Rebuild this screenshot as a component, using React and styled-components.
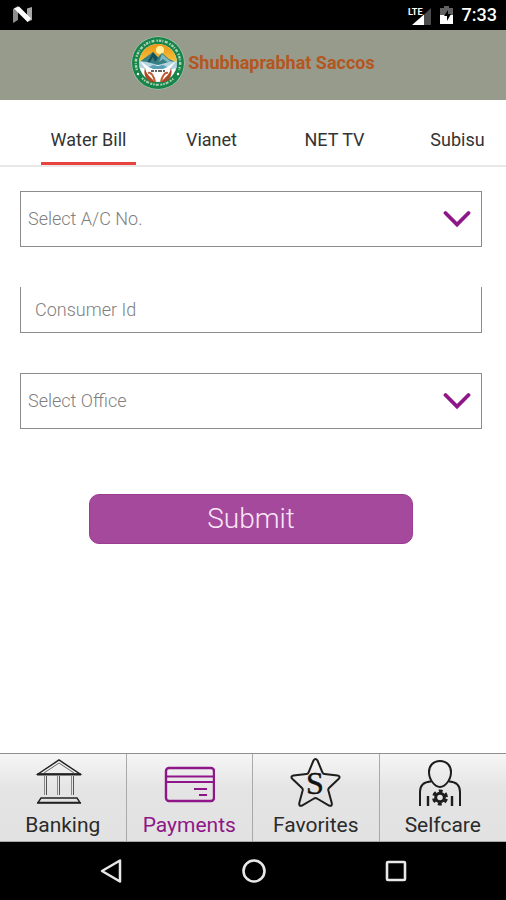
import React, { useState } from "react";
import styled, { createGlobalStyle } from "styled-components";

const GlobalStyle = createGlobalStyle`
  * {
    box-sizing: border-box;
  }
  body {
    margin: 0;
    background: #fff;
    font-family: Roboto, "Liberation Sans", sans-serif;
  }
  button, input, select {
    font-family: inherit;
  }
`;

const Screen = styled.div`
  display: flex;
  flex-direction: column;
  min-height: 100vh;
  overflow: hidden;
`;

const StatusBar = styled.div`
  display: flex;
  align-items: center;
  height: 30px;
  padding: 0 9px 0 13px;
  background: #000;
  color: #fff;
`;

const StatusIcons = styled.div`
  display: flex;
  align-items: center;
  margin-left: auto;
  gap: 9px;
`;

const Clock = styled.span`
  font-size: 18px;
  font-weight: 500;
  line-height: 30px;
`;

const Header = styled.header`
  display: flex;
  justify-content: center;
  gap: 3px;
  height: 70px;
  padding-top: 6px;
  background: #969b8c;
`;

const Title = styled.h1`
  margin: 0;
  color: #b5561f;
  font-size: 18px;
  font-weight: 700;
  line-height: 54px;
`;

const Tabs = styled.nav`
  display: flex;
  height: 67px;
  padding-left: 27px;
  border-bottom: 2px solid #e8e8e8;
`;

const Tab = styled.button`
  flex: 0 0 123px;
  padding: 0;
  border: 0;
  background: none;
  color: #333;
  font-size: 18px;
  cursor: pointer;
`;

const TabLabel = styled.span`
  display: inline-block;
  height: 65px;
  padding: 0 10px;
  border-bottom: 3px solid ${(props) => (props.$active ? "#e8433f" : "transparent")};
  line-height: 80px;
`;

const Form = styled.form`
  display: flex;
  flex: 1;
  flex-direction: column;
  padding: 24px 24px 24px 20px;
`;

const SelectBox = styled.div`
  display: grid;
  align-items: center;
  height: 56px;
  border: 1px solid #8c8c8c;

  & > * {
    grid-area: 1 / 1;
  }
  & > svg {
    justify-self: end;
    margin-right: 10px;
    pointer-events: none;
  }
`;

const Select = styled.select`
  width: 100%;
  height: 100%;
  padding: 0 44px 2px 7px;
  border: 0;
  appearance: none;
  background: transparent;
  color: #808080;
  font-size: 18px;
  font-weight: 300;
`;

const TextInput = styled.input`
  height: 46px;
  margin: 40px 0;
  padding: 0 14px 1px;
  border: 1px solid #8c8c8c;
  border-top: 0;
  border-radius: 0;
  background: #fff;
  color: #808080;
  font-size: 18px;
  font-weight: 300;

  &::placeholder {
    color: #808080;
    opacity: 1;
  }
`;

const SubmitButton = styled.button`
  align-self: center;
  width: 70%;
  height: 50px;
  margin-top: 65px;
  border: 1px solid #9c3c93;
  border-radius: 10px;
  background: #a4499b;
  color: #fbe6f9;
  font-size: 28px;
  font-weight: 300;
  line-height: 46px;
  cursor: pointer;
`;

const BottomNav = styled.nav`
  display: grid;
  grid-template-columns: repeat(4, 1fr);
  height: 89px;
  border-top: 1px solid #8f8f8f;
  border-bottom: 1px solid #a9a9a9;
`;

const NavItem = styled.a`
  display: flex;
  flex-direction: column;
  align-items: center;
  padding-top: 3px;
  border-right: 1px solid #a9a9a9;
  background: linear-gradient(#f6f6f6, #e4e4e4 40%, #e2e2e2);
  color: ${(props) => (props.$active ? "#8f1688" : "#2b2b2b")};
  font-size: 21px;
  line-height: 26px;
  text-decoration: none;

  &:last-child {
    border-right: 0;
  }
  & > svg {
    flex: none;
    margin-bottom: 3px;
  }
`;

const SystemBar = styled.div`
  display: flex;
  justify-content: space-between;
  align-items: center;
  height: 58px;
  padding: 0 97px 0 98px;
  background: #000;
`;

const SystemButton = styled.button`
  display: flex;
  padding: 0;
  border: 0;
  background: none;
  cursor: pointer;
`;

const tabs = ["Water Bill", "Vianet", "NET TV", "Subisu"];

function AndroidN() {
  return (
    <svg width="20" height="18" viewBox="0 0 20 18" aria-hidden="true">
      <path d="M0 3 5 0v14l-5 3z" fill="#8d8d8d" />
      <path d="M14 2.500l5-1.500v13l-5 2z" fill="#a8a8a8" />
      <path d="M1 2.500 6 .5l12 12-3.500 3.500z" fill="#fff" />
    </svg>
  );
}

function Signal() {
  return (
    <svg width="24" height="21" viewBox="0 0 24 21" aria-label="LTE signal">
      <path d="M24 3v17H6z" fill="#4b4b4b" />
      <path d="M17 9.500V20H5z" fill="#fff" />
      <text x="1" y="10" fill="#fff" fontSize="9" fontWeight="700">
        LTE
      </text>
    </svg>
  );
}

function Battery() {
  return (
    <svg width="13" height="18" viewBox="0 0 13 18" aria-hidden="true">
      <path d="M4 0h5v2h4v7H0V2h4z" fill="#626262" />
      <path d="M0 9h13v9H0z" fill="#fff" />
      <path d="M8 4 4 10h3v5l4-7H8z" fill="#000" />
    </svg>
  );
}

function Logo() {
  return (
    <svg width="54" height="54" viewBox="0 0 54 54" aria-hidden="true">
      <defs>
        <clipPath id="seal">
          <circle cx="27" cy="27" r="19" />
        </clipPath>
        <linearGradient id="sky" x1="0" y1="0" x2="0" y2="1">
          <stop offset="0" stopColor="#e89312" />
          <stop offset="1" stopColor="#f6c53e" />
        </linearGradient>
      </defs>
      <circle cx="27" cy="27" r="26.500" fill="#b9d0bb" />
      <circle cx="27" cy="27" r="26" fill="#17844a" />
      <path
        d="M6 34A22.200 22.200 0 1 1 48 34"
        fill="none"
        stroke="#a9d3b4"
        strokeWidth="2.400"
        strokeDasharray="1.500 1 2.500 1 1 1.500 3 2"
      />
      <path
        d="M11 42A22.200 22.200 0 0 0 43 42"
        fill="none"
        stroke="#a9d3b4"
        strokeWidth="2"
        strokeDasharray="2 1 1.500 1 3 1.500"
      />
      <circle cx="7" cy="38" r="1.200" fill="#fff" />
      <circle cx="47" cy="38" r="1.200" fill="#fff" />
      <g clipPath="url(#seal)">
        <path d="M8 8h38v38H8z" fill="#fff" />
        <path d="M8 7h38v19H8z" fill="url(#sky)" />
        <circle cx="29" cy="14" r="4" fill="#fff0a2" />
        <path d="M7 27l8-6 7-5 5 5 4-4 7 6 9 4v4H7z" fill="#367f83" />
        <path d="M22 16l5 6-3 4-2-5-3 5-3 1z" fill="#174f56" />
        <path d="M31 18l7 6 5 3-7-1-4-3-4 3z" fill="#7fb8bd" />
        <path d="M7 25l9 1 11 3 11-3 9-1v7l-11 2H18L7 31z" fill="#b6d4df" />
        <path d="M9 25l10 7 8-3 8 3 10-7-8 10H16z" fill="#fff" />
        <path d="M18 31l4-2 5 1 5-1 4 2-4 2H22z" fill="#5aa0b5" />
      </g>
      <path d="M14 32c2 8 5 8 10 14h-4c-5-2-8-8-6-14z" fill="#ae4824" />
      <path d="M40 32c-2 8-5 8-10 14h4c5-2 8-8 6-14z" fill="#ae4824" />
      <path d="M17 37c3-1 6 3 7 9M37 37c-3-1-6 3-7 9" fill="none" stroke="#bd6038" strokeWidth="2" />
      <path d="M20 35h3m1 0h2m1 0h4m1 0h2" stroke="#666" strokeWidth="2" />
    </svg>
  );
}

function Chevron() {
  return (
    <svg width="28" height="18" viewBox="0 0 28 18" aria-hidden="true">
      <path
        d="M2.500 3 14 14.500 25.500 3"
        fill="none"
        stroke="#8f1688"
        strokeWidth="3.800"
        strokeLinecap="round"
      />
    </svg>
  );
}

function BankIcon() {
  return (
    <svg width="60" height="52" viewBox="0 0 60 52" fill="none" stroke="#222" aria-hidden="true">
      <path d="M5 17 26 3l21 14z" strokeWidth="1.500" />
      <path d="M11 16 26 6l15 10" strokeWidth="1" stroke="#666" />
      <path d="M4 17.500h44" strokeWidth="1.800" />
      <path d="M11.500 19v19M24.500 19v19M38.500 19v19" stroke="#888" />
      <path d="M13.500 19v19M26.500 19v19M40.500 19v19" stroke="#555" />
      <path d="M8 41h36l3 4.500H5z" strokeWidth="1.400" />
      <path d="M4 46h44" strokeWidth="1.400" />
    </svg>
  );
}

function CardIcon() {
  return (
    <svg width="52" height="52" viewBox="0 0 52 52" fill="none" stroke="#8f1688" aria-hidden="true">
      <rect x="3" y="11" width="48" height="33" rx="3" strokeWidth="2.400" />
      <path d="M3 19.500h48M3 25h48" strokeWidth="2.200" />
      <path d="M31 32h13M36 38h8" strokeWidth="2" />
    </svg>
  );
}

function StarIcon() {
  return (
    <svg width="52" height="52" viewBox="0 0 52 52" aria-hidden="true">
      <path
        d="M23.500 3.500q2-3.200 4 0l5 12q.5 1.500 2 1.500l13 1.500q3.500 1 1 3.500L39 31q-1 1-.7 2.300l3.500 13q.5 3.500-2.800 2.200L27 41.500q-1.500-.8-3 0L12 48.500q-3 1.300-2.800-2.200l3.500-13q.3-1.300-.7-2.300L2.500 22q-2.500-2.500 1-3.500L16.500 17q1.500 0 2-1.500z"
        fill="none"
        stroke="#1d1d1d"
        strokeWidth="2"
      />
      <text
        x="25"
        y="37"
        textAnchor="middle"
        fill="#111"
        stroke="#111"
        strokeWidth=".5"
        fontFamily="Liberation Serif, serif"
        fontSize="32"
      >
        S
      </text>
    </svg>
  );
}

function PersonIcon() {
  return (
    <svg width="58" height="52" viewBox="0 0 58 52" fill="none" stroke="#1d1d1d" aria-hidden="true">
      <path
        d="M26 4c7 0 11 5 11 11 0 8-6 15-11 15S15 23 15 15C15 9 19 4 26 4z"
        strokeWidth="2"
      />
      <path d="M6 49V35q0-10 11-10.500M46 49V35q0-10-11-10.500" strokeWidth="2" />
      <path d="M14 39v10M38 39v10" strokeWidth="2.400" />
      <circle cx="26" cy="40.500" r="4.300" strokeWidth="3" />
      <circle
        cx="26"
        cy="40.500"
        r="6.500"
        strokeWidth="3"
        strokeDasharray="3.800 3"
        transform="rotate(13 26 40.500)"
      />
    </svg>
  );
}

const navItems = [
  { label: "Banking", icon: <BankIcon /> },
  { label: "Payments", icon: <CardIcon /> },
  { label: "Favorites", icon: <StarIcon /> },
  { label: "Selfcare", icon: <PersonIcon /> },
];

function SelectField({ label, name }) {
  return (
    <SelectBox>
      <Select name={name} aria-label={label} defaultValue="">
        <option value="">{label}</option>
      </Select>
      <Chevron />
    </SelectBox>
  );
}

function App() {
  const [activeTab, setActiveTab] = useState("Water Bill");

  return (
    <>
      <GlobalStyle />
      <Screen>
        <StatusBar>
          <AndroidN />
          <StatusIcons>
            <Signal />
            <Battery />
            <Clock>7:33</Clock>
          </StatusIcons>
        </StatusBar>
        <Header>
          <Logo />
          <Title>Shubhaprabhat Saccos</Title>
        </Header>
        <Tabs>
          {tabs.map((tab) => (
            <Tab key={tab} type="button" onClick={() => setActiveTab(tab)}>
              <TabLabel $active={tab === activeTab}>{tab}</TabLabel>
            </Tab>
          ))}
        </Tabs>
        <Form onSubmit={(e) => e.preventDefault()}>
          <SelectField name="account" label="Select A/C No." />
          <TextInput name="consumer" aria-label="Consumer Id" placeholder="Consumer Id" />
          <SelectField name="office" label="Select Office" />
          <SubmitButton type="submit">Submit</SubmitButton>
        </Form>
        <BottomNav>
          {navItems.map((item) => (
            <NavItem key={item.label} href="#" $active={item.label === "Payments"}>
              {item.icon}
              {item.label}
            </NavItem>
          ))}
        </BottomNav>
        <SystemBar>
          <SystemButton type="button" aria-label="Back">
            <svg width="26" height="26" viewBox="0 0 26 26" fill="none" stroke="#e8e8e8">
              <path d="M4 13 22 2.500v21z" strokeWidth="2.500" strokeLinejoin="round" />
            </svg>
          </SystemButton>
          <SystemButton type="button" aria-label="Home">
            <svg width="26" height="26" viewBox="0 0 26 26" fill="none" stroke="#e8e8e8">
              <circle cx="13" cy="13" r="10.500" strokeWidth="2.600" />
            </svg>
          </SystemButton>
          <SystemButton type="button" aria-label="Recent apps">
            <svg width="26" height="26" viewBox="0 0 26 26" fill="none" stroke="#e8e8e8">
              <rect x="4" y="4" width="18" height="18" rx="1" strokeWidth="2.600" />
            </svg>
          </SystemButton>
        </SystemBar>
      </Screen>
    </>
  );
}

export default App;
